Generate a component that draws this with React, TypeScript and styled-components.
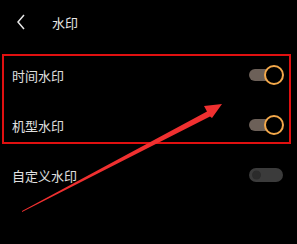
import React from "react";
import styled, { createGlobalStyle } from "styled-components";

const Global = createGlobalStyle`
  html, body { margin: 0; padding: 0; background: #000; }
  body { font-family: "Noto Sans CJK SC", "Noto Sans", sans-serif; }
`;

const Screen = styled.div`
  position: relative;
  width: 297px;
  height: 244px;
  background: #000;
  overflow: hidden;
`;

const Header = styled.div`
  display: flex;
  align-items: center;
  height: 44px;
  padding-left: 16px;
  gap: 26px;
  color: #e8e8e8;
  font-size: 13px;
`;

const List = styled.div`
  margin-top: 6px;
  display: flex;
  flex-direction: column;
`;

const Row = styled.div`
  display: flex;
  align-items: center;
  justify-content: space-between;
  height: 50px;
  padding: 0 14px 0 12px;
  color: #e0e0e0;
  font-size: 13px;
`;

const Toggle = styled.div<{ $on: boolean }>`
  position: relative;
  width: 34px;
  height: ${(p) => (p.$on ? 12 : 14)}px;
  border-radius: 7px;
  background: ${(p) => (p.$on ? "#6c6058" : "#3b3b3b")};
`;

const Knob = styled.div<{ $on: boolean }>`
  position: absolute;
  top: 50%;
  transform: translateY(-50%);
  ${(p) =>
    p.$on
      ? `right: -1px; width: 16px; height: 16px; border: 2.5px solid #f3a84a; background: #000;`
      : `left: 3px; width: 9px; height: 9px; background: #2b2b2b;`}
  border-radius: 50%;
`;

const Highlight = styled.div`
  position: absolute;
  left: 2px;
  top: 54px;
  width: 285px;
  height: 86px;
  border: 2px solid #e01010;
  pointer-events: none;
`;

const Arrow = styled.svg`
  position: absolute;
  left: 0;
  top: 0;
  pointer-events: none;
`;

const Chevron = () => (
  <svg width="10" height="16" viewBox="0 0 10 16">
    <path d="M8 1 L2 8 L8 15" fill="none" stroke="#e8e8e8" strokeWidth="1.5" />
  </svg>
);

const items = [
  { label: "时间水印", on: true },
  { label: "机型水印", on: true },
  { label: "自定义水印", on: false },
];

export default function App() {
  return (
    <Screen>
      <Global />
      <Header>
        <Chevron />
        <span>水印</span>
      </Header>
      <List>
        {items.map((it) => (
          <Row key={it.label}>
            <span>{it.label}</span>
            <Toggle $on={it.on}>
              <Knob $on={it.on} />
            </Toggle>
          </Row>
        ))}
      </List>
      <Highlight />
      <Arrow width="297" height="244" viewBox="0 0 297 244">
        <polygon points="22,211 207,111.5 204,106 222,104 212,118 210,116.5 22,212" fill="#f03030" />
      </Arrow>
    </Screen>
  );
}
